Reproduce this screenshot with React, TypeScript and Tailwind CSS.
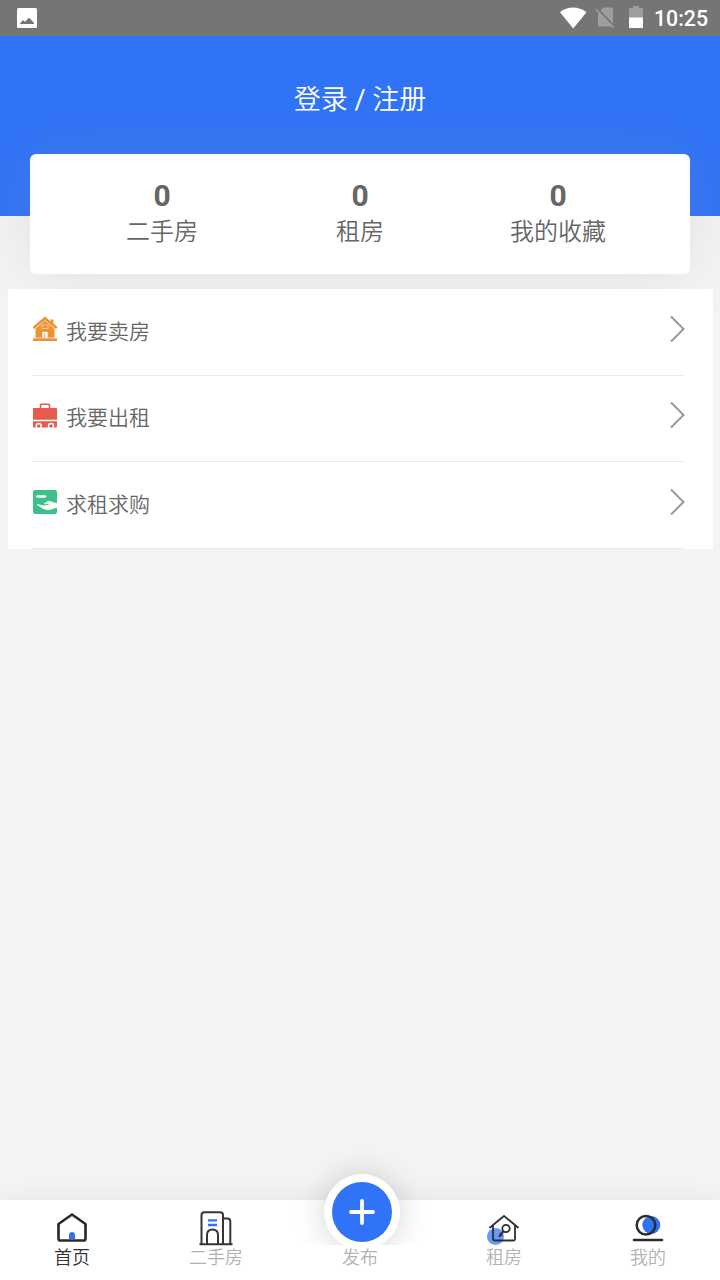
import type { ReactNode } from "react";
import { clsx } from "clsx";

const STATS = [
  { label: "二手房", count: 0 },
  { label: "租房", count: 0 },
  { label: "我的收藏", count: 0 },
];

function StatusBar() {
  return (
    <div className="flex h-9 items-center justify-between bg-[#757575] pl-[17px] pr-3 text-white">
      <svg width="20" height="20" viewBox="0 0 20 20" className="mb-px">
        <rect width="20" height="20" rx="1.500" fill="#fff" />
        <path d="M3 16V15.500L6 12 8 14 12 9.500 17 15V16Z" fill="#757575" />
      </svg>
      <div className="flex items-center">
        <svg width="28" height="22" viewBox="0 0 28 22" className="mb-px mr-2">
          <path d="M1 5.2C8.500-1 19.500-1 27.500 5.200L14.200 21.500Z" fill="#fff" />
        </svg>
        <svg width="20" height="22" viewBox="0 0 20 22" className="mr-[14px]">
          <path d="M8 .5H17Q18 .5 18 1.500V18.500Q18 19.500 17 19.500H4Q3 19.500 3 18.500V6Z" fill="#9e9e9e" />
          <path d="M1.800 0.800 20 19.800" stroke="#757575" strokeWidth="1.800" />
          <path d="M.8 2.200 18.500 20.800" stroke="#9e9e9e" strokeWidth="1.600" />
        </svg>
        <svg width="14" height="22" viewBox="0 0 14 22" className="mb-[2px] mr-[11px]">
          <path d="M4 0H10V2H13Q14 2 14 3V12H0V3Q0 2 1 2H4Z" fill="#9e9e9e" />
          <path d="M0 11.500H14V21Q14 22 13 22H1Q0 22 0 21Z" fill="#fff" />
        </svg>
        <span className="pt-[2px] font-[Roboto] text-[21.300px] font-medium leading-6">10:25</span>
      </div>
    </div>
  );
}

function SellIcon() {
  return (
    <svg width="26" height="26" viewBox="0 0 26 26" fill="#ec9335">
      <path d="M13 0.500 0.800 10.800Q.5 13 2.500 12.800L13 4.300 23.500 12.800Q25.500 13 25.200 10.800L21.500 7.500V3.500H18.500V5.300Z" />
      <path d="M13 4.500 3.500 12.500V21.700H22.500V12.500Z" />
      <path d="M13 4.600 3 13M13 4.600 23 13" stroke="#fff" strokeOpacity=".5" strokeWidth=".5" />
      <path d="M1 22.300H25V25H1Z" />
      <path d="M10 9H16V12.500H10Z" fill="none" stroke="#fff" strokeOpacity=".6" strokeWidth=".8" />
      <path d="M10.300 15.800H15.700V22H10.300Z" fill="#fff" />
      <path d="M12.300 17.500H13.200V22H12.300Z" />
    </svg>
  );
}

function RentOutIcon() {
  return (
    <svg width="26" height="26" viewBox="0 0 26 26">
      <path d="M8.500 6V2Q8.500 1.200 9.300 1.200H16.700Q17.500 1.200 17.500 2V6" fill="none" stroke="#e75b4e" strokeWidth="1.600" />
      <path d="M2 5H24Q25 5 25 6V16.700H1V6Q1 5 2 5Z" fill="#e75b4e" />
      <path d="M1 18.300H25V23Q25 24.500 23.500 24.500H2.500Q1 24.500 1 23Z" fill="#e75b4e" />
      <g fill="#e75b4e" stroke="#fff" strokeWidth="1.500">
        <circle cx="6.700" cy="23" r="2.500" />
        <circle cx="19" cy="23" r="2.500" />
      </g>
    </svg>
  );
}

function WantedIcon() {
  return (
    <svg width="26" height="26" viewBox="0 0 26 26">
      <rect x="1" y="1" width="24" height="24" rx="2.500" fill="#3ac288" />
      <path d="M5.500 7.500H13" stroke="#fff" strokeWidth="2.500" strokeLinecap="round" />
      <path
        d="M5 15C8 15 9.500 17 12.500 16.500L17 15.500C16 14.600 13.500 15.600 12 15C14 12.500 17 11.200 19.500 12.600C21 13.600 23 14 25 14V19C22 18.500 20 21 16 21C12 21 10 19 5 16Z"
        fill="#fff"
      />
    </svg>
  );
}

function HomeTabIcon() {
  return (
    <svg width="34" height="36" viewBox="0 0 34 36">
      <path d="M17 4.500 3.500 14V28.500Q3.500 30.500 5.500 30.500H28.500Q30.500 30.500 30.500 28.500V14Z" fill="none" stroke="#2c2c2c" strokeWidth="2.700" strokeLinejoin="round" />
      <path d="M14 29V25Q14 22 17 22T20 25V29Z" fill="#3073f7" />
    </svg>
  );
}

function BuildingTabIcon() {
  return (
    <svg width="34" height="36" viewBox="0 0 34 36" fill="none" stroke="#353535" strokeWidth="2">
      <path d="M2.500 34V5Q2.500 2.200 5.500 2.200H21Q24 2.200 24 5V34M24 8.500H28.500Q31.300 8.500 31.300 11.500V34M0.500 34.300H33.500" />
      <path d="M8 34V25Q8 19.500 13.500 19.500T19 25V34" />
      <path d="M9 10.300H18M9 15H18" stroke="#3073f7" strokeWidth="2.300" />
    </svg>
  );
}

function KeyTabIcon() {
  return (
    <svg width="34" height="36" viewBox="0 0 34 36" fill="none" stroke="#303030" strokeWidth="1.800" strokeLinecap="round" strokeLinejoin="round">
      <circle cx="8.500" cy="26.500" r="8.500" fill="#6998fc" stroke="none" />
      <path d="M3 17.500 17 6 31 17.500M6 15.500V29Q6 30.500 7.500 30.500H26.500Q28 30.500 28 29V15.500" />
      <circle cx="19" cy="18.500" r="3.700" />
      <path d="M16.300 21.300 12.500 26.300M13.500 23.800 14.500 25" strokeWidth="2" />
    </svg>
  );
}

function MineTabIcon() {
  return (
    <svg width="34" height="36" viewBox="0 0 34 36">
      <circle cx="20.300" cy="15" r="9" fill="#3073f7" />
      <circle cx="15" cy="15.200" r="9.300" fill="none" stroke="#2c2c2c" strokeWidth="2.500" />
      <path d="M3 30H31" stroke="#2c2c2c" strokeWidth="2.600" strokeLinecap="round" />
    </svg>
  );
}

const MENU = [
  { label: "我要卖房", icon: <SellIcon /> },
  { label: "我要出租", icon: <RentOutIcon /> },
  { label: "求租求购", icon: <WantedIcon /> },
];

function MenuRow({ icon, label }: { icon: ReactNode; label: string }) {
  return (
    <div className="flex h-[86.500px] items-center border-b border-[#ebebeb] pb-[5px]">
      <span>{icon}</span>
      <span className="ml-[8px] pt-[5.400px] text-[21px] leading-[30px] text-[#666]">{label}</span>
      <svg width="16" height="28" viewBox="0 0 16 28" className="-mr-px mb-px ml-auto" fill="none" stroke="#999" strokeWidth="2">
        <path d="M2 1.500 14.500 14 2 26.500" />
      </svg>
    </div>
  );
}

const TABS = [
  { label: "首页", icon: <HomeTabIcon /> },
  { label: "二手房", icon: <BuildingTabIcon /> },
  { label: "发布", icon: null },
  { label: "租房", icon: <KeyTabIcon /> },
  { label: "我的", icon: <MineTabIcon /> },
];

function TabBar() {
  return (
    <nav className="relative flex h-20 bg-white shadow-[0_0_30px_rgba(0,20,10,0.07)]">
      {/* Raised publish button, its shadow ends above the label */}
      <div className="absolute left-[324px] top-[-26px] flex size-[76px] items-center justify-center rounded-full bg-white shadow-[0_0_30px_rgba(100,110,100,0.3)]">
        <div className="flex size-[60px] items-center justify-center rounded-full bg-[#3073f7]">
          <svg width="26" height="26" viewBox="0 0 26 26" stroke="#fff" strokeWidth="3.800" strokeLinecap="round">
            <path d="M13 2V24M2 13H24" />
          </svg>
        </div>
      </div>
      <div className="absolute inset-x-0 bottom-0 h-[35px] bg-white" />
      {TABS.map((tab, i) => (
        <div key={tab.label} className="relative flex flex-1 flex-col items-center pt-[10px]">
          <div className="h-[37px]">{tab.icon}</div>
          <span className={clsx("text-[18px] leading-[22px]", i === 0 ? "text-[#333]" : "text-[#b2b2b2]")}>{tab.label}</span>
        </div>
      ))}
    </nav>
  );
}

export default function App() {
  return (
    <div className="flex h-[1280px] w-[720px] flex-col overflow-hidden bg-[#f4f4f4] font-[Roboto,'Noto_Sans_CJK_SC_DemiLight','Noto_Sans_CJK_SC_Light','Noto_Sans_CJK_SC',sans-serif] font-[350]">
      <StatusBar />
      <header className="h-[180px] bg-[#3073f7] px-[30px] pt-[44px]">
        <h1 className="h-[74px] text-center text-[27px] leading-[40px] text-white">
          登录 <span className="font-normal">/</span> 注册
        </h1>
        <div className="flex h-[120px] rounded-[6px] bg-white px-[33px] pt-6 shadow-[0_0_60px_rgba(150,150,150,0.2)]">
          {STATS.map((stat) => (
            <div key={stat.label} className="flex flex-1 flex-col items-center text-[#666]">
              <span className="text-[30px] font-bold leading-9">{stat.count}</span>
              <span className="text-[24px] leading-9">{stat.label}</span>
            </div>
          ))}
        </div>
      </header>
      <main className="relative ml-2 mr-[7px] mt-[73px] bg-white pl-6 pr-[29px]">
        {MENU.map((item) => (
          <MenuRow key={item.label} icon={item.icon} label={item.label} />
        ))}
      </main>
      <div className="flex-1" />
      <TabBar />
    </div>
  );
}
